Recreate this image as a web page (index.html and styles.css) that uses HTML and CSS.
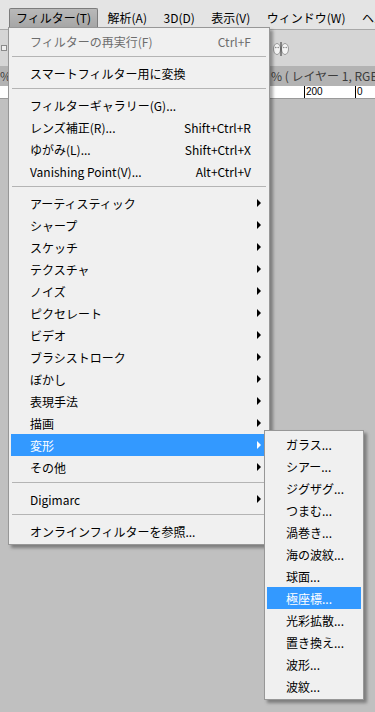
FILE: index.html
```html
<!DOCTYPE html>
<html lang="ja">
<head>
    <meta charset="UTF-8">
    <meta name="viewport" content="width=device-width, initial-scale=1.0">
    <title>フィルター</title>
    <link rel="stylesheet" href="styles.css">
</head>
<body>
    <div class="app">
        <div class="menubar">
            <span class="mb-item active">フィルター(T)</span>
            <span class="mb-item">解析(A)</span>
            <span class="mb-item">3D(D)</span>
            <span class="mb-item">表示(V)</span>
            <span class="mb-item">ウィンドウ(W)</span>
            <span class="mb-item">ヘルプ(H)</span>
        </div>

        <div class="toolbar">
            <span class="grip"></span>
            <svg class="masks" width="16" height="14" viewBox="0 0 16 14">
                <ellipse cx="4" cy="7" rx="3.5" ry="5.5" fill="#f4f4f4" stroke="#9a9a9a"/>
                <ellipse cx="12" cy="7" rx="3.5" ry="5.5" fill="#f4f4f4" stroke="#9a9a9a"/>
                <circle cx="2.8" cy="5.5" r="0.8" fill="#888"/>
                <circle cx="5.2" cy="5.5" r="0.8" fill="#888"/>
                <circle cx="10.8" cy="5.5" r="0.8" fill="#888"/>
                <circle cx="13.2" cy="5.5" r="0.8" fill="#888"/>
                <line x1="8" y1="0" x2="8" y2="14" stroke="#333" stroke-width="1"/>
            </svg>
        </div>

        <div class="tabbar">
            <span class="tab first">%</span>
            <span class="tab">% ( レイヤー 1, RGB/8) *</span>
        </div>

        <div class="ruler">
            <span class="mark m200">200</span>
            <span class="mark m0">0</span>
        </div>

        <div class="canvas"></div>
    </div>

    <!-- フィルターメニュー -->
    <div class="menu main-menu">
        <div class="item disabled"><span class="label">フィルターの再実行(F)</span><span class="key">Ctrl+F</span></div>
        <div class="sep"></div>
        <div class="item"><span class="label">スマートフィルター用に変換</span></div>
        <div class="sep"></div>
        <div class="item"><span class="label">フィルターギャラリー(G)...</span></div>
        <div class="item"><span class="label">レンズ補正(R)...</span><span class="key">Shift+Ctrl+R</span></div>
        <div class="item"><span class="label">ゆがみ(L)...</span><span class="key">Shift+Ctrl+X</span></div>
        <div class="item"><span class="label">Vanishing Point(V)...</span><span class="key">Alt+Ctrl+V</span></div>
        <div class="sep"></div>
        <div class="item has-sub"><span class="label">アーティスティック</span></div>
        <div class="item has-sub"><span class="label">シャープ</span></div>
        <div class="item has-sub"><span class="label">スケッチ</span></div>
        <div class="item has-sub"><span class="label">テクスチャ</span></div>
        <div class="item has-sub"><span class="label">ノイズ</span></div>
        <div class="item has-sub"><span class="label">ピクセレート</span></div>
        <div class="item has-sub"><span class="label">ビデオ</span></div>
        <div class="item has-sub"><span class="label">ブラシストローク</span></div>
        <div class="item has-sub"><span class="label">ぼかし</span></div>
        <div class="item has-sub"><span class="label">表現手法</span></div>
        <div class="item has-sub"><span class="label">描画</span></div>
        <div class="item has-sub selected"><span class="label">変形</span></div>
        <div class="item has-sub"><span class="label">その他</span></div>
        <div class="sep"></div>
        <div class="item has-sub"><span class="label">Digimarc</span></div>
        <div class="sep"></div>
        <div class="item"><span class="label">オンラインフィルターを参照...</span></div>
    </div>

    <!-- 変形サブメニュー -->
    <div class="menu sub-menu">
        <div class="item"><span class="label">ガラス...</span></div>
        <div class="item"><span class="label">シアー...</span></div>
        <div class="item"><span class="label">ジグザグ...</span></div>
        <div class="item"><span class="label">つまむ...</span></div>
        <div class="item"><span class="label">渦巻き...</span></div>
        <div class="item"><span class="label">海の波紋...</span></div>
        <div class="item"><span class="label">球面...</span></div>
        <div class="item selected"><span class="label">極座標...</span></div>
        <div class="item"><span class="label">光彩拡散...</span></div>
        <div class="item"><span class="label">置き換え...</span></div>
        <div class="item"><span class="label">波形...</span></div>
        <div class="item"><span class="label">波紋...</span></div>
    </div>
</body>
</html>
```

FILE: styles.css
```css
* {
    margin: 0;
    padding: 0;
    box-sizing: border-box;
}

body {
    font-family: 'Noto Sans CJK JP', 'Noto Sans', sans-serif;
    font-size: 12px;
    color: #000;
    width: 375px;
    height: 712px;
    overflow: hidden;
    position: relative;
    background: #c0c0c0;
}

.app {
    display: flex;
    flex-direction: column;
    height: 100%;
}

/* メニューバー */
.menubar {
    height: 30px;
    background: #e4e4e4;
    border-bottom: 1px solid #a8a8a8;
    display: flex;
    gap: 2.5px;
    padding-left: 9px;
    white-space: nowrap;
    overflow: hidden;
}

.mb-item {
    flex-shrink: 0;
    margin-top: 8px;
    height: 21px;
    line-height: 18px;
    padding: 0 6px;
    border: 1px solid transparent;
    border-bottom: none;
}

.mb-item.active {
    background: linear-gradient(#b9b9b9, #a4a4a4);
    border-color: #7c7c7c;
    border-radius: 2px 2px 0 0;
}

/* ツールバー */
.toolbar {
    height: 36px;
    background: #d5d5d5;
    display: flex;
    align-items: center;
}

.grip {
    width: 6px;
    height: 6px;
    margin-left: 1px;
    border: 1px solid #8a8a8a;
    background: #eee;
}

.masks {
    margin-left: 266px;
    margin-top: 1px;
}

/* ドキュメントタブ */
.tabbar {
    height: 20px;
    background: #b3b3b3;
    color: #3c3c3c;
    line-height: 20px;
    display: flex;
    white-space: nowrap;
    overflow: hidden;
}

.tab {
    flex-shrink: 0;
}

.tab.first {
    width: 271px;
}

/* 定規 */
.ruler {
    height: 13px;
    background: #fff;
    border-bottom: 1px solid #9a9a9a;
    display: flex;
    font-family: 'Liberation Sans', sans-serif;
    font-size: 10px;
    line-height: 12px;
}

.mark {
    border-left: 1px solid #000;
    padding-left: 1px;
    height: 12px;
}

.m200 {
    margin-left: 304px;
    width: 51px;
}

.canvas {
    flex: 1;
    background: #c0c0c0;
}

/* メニュー共通 */
.menu {
    position: absolute;
    background: #f0f0f0;
    border: 1px solid #979797;
    box-shadow: 3px 3px 3px rgba(0, 0, 0, 0.35);
}

.main-menu {
    top: 27px;
    left: 8px;
    width: 262px;
    padding: 2px 4px 2px 2px;
}

.sub-menu {
    top: 430px;
    left: 264px;
    width: 100px;
    padding: 2px;
}

.item {
    position: relative;
    height: 22px;
    display: flex;
    align-items: center;
    padding: 0 14px 0 19px;
    white-space: nowrap;
}

.item .label {
    flex: 1;
}

.item.disabled {
    color: #6d6d6d;
}

.item.selected {
    background: #3399ff;
    color: #fff;
}

.item.has-sub::after {
    content: '';
    position: absolute;
    right: 4px;
    top: 7px;
    border-left: 4px solid #000;
    border-top: 4px solid transparent;
    border-bottom: 4px solid transparent;
}

.item.has-sub.selected::after {
    border-left-color: #fff;
}

.sep {
    height: 10px;
    position: relative;
}

.sep::before {
    content: '';
    position: absolute;
    top: 4px;
    left: 1px;
    right: -1px;
    height: 1px;
    background: #b4b4b4;
}
```
